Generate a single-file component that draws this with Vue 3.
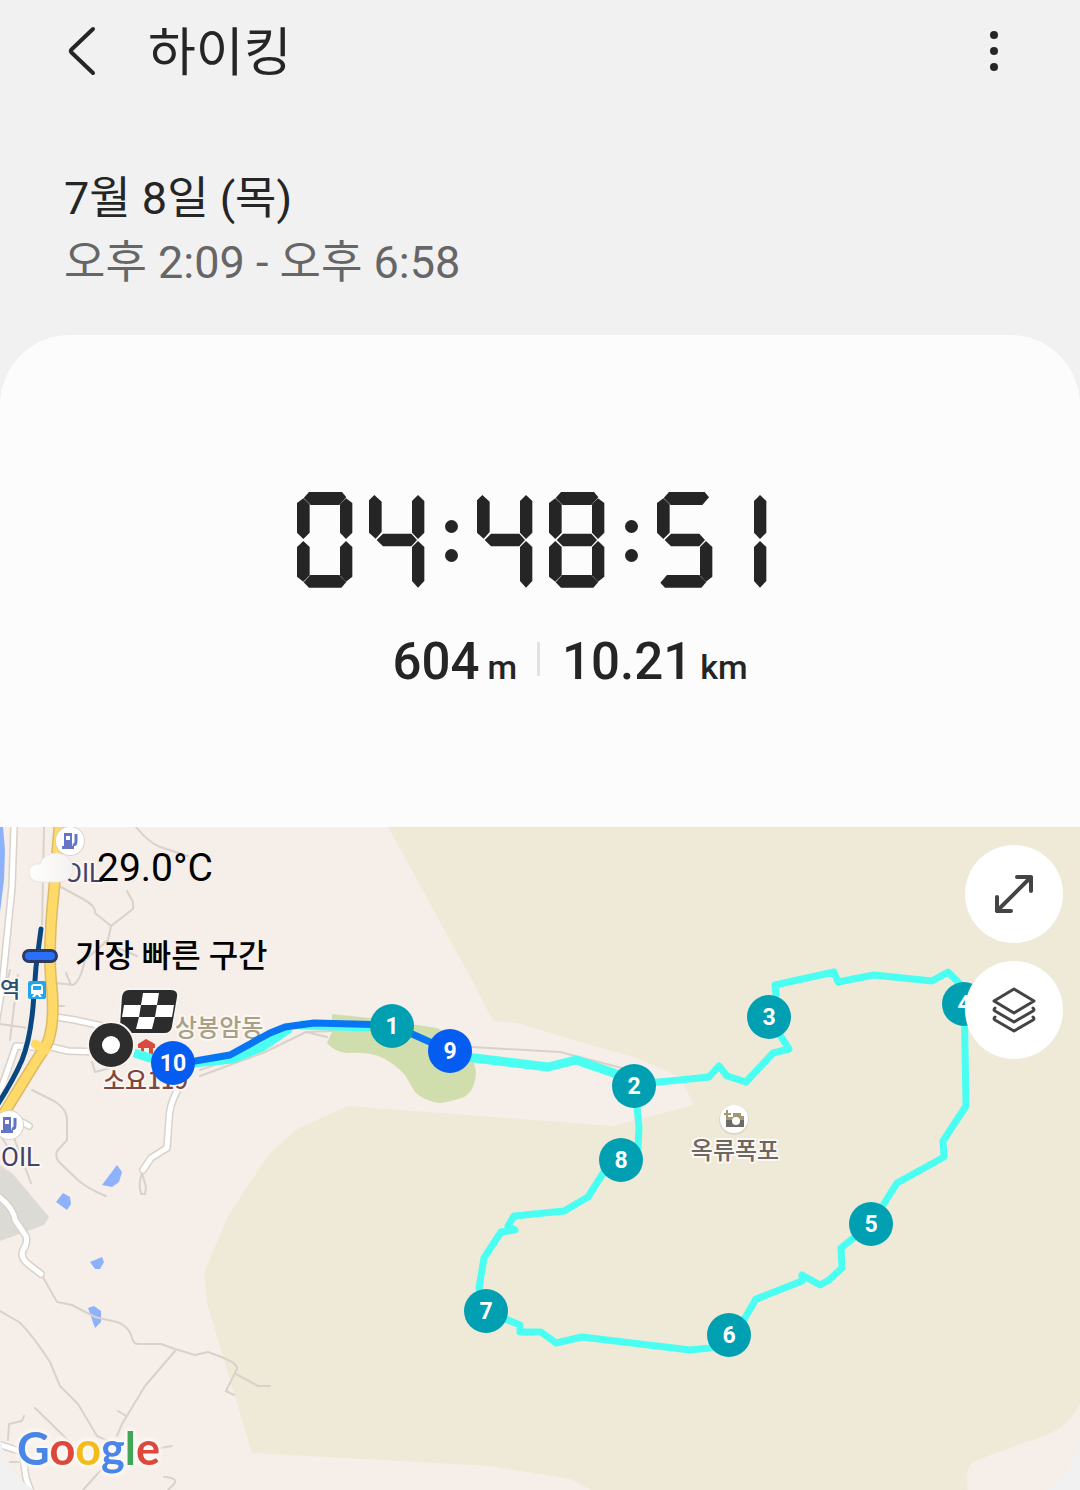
<script setup>
const time = '04:48:51'

// Segment outlines on a 168 x 288 digit cell
const shapes = {
  a: [[20, 18], [36, 0], [135, 0], [148, 16], [127, 39], [41, 39]],
  aOpen: [[20, 18], [36, 0], [143, 0], [156, 16], [136, 39], [41, 39]],
  b: [[147, 19], [166, 33], [166, 122], [147, 141], [129, 122], [129, 37]],
  bOpen: [[147, 9], [166, 27], [166, 122], [147, 141], [129, 122], [129, 27]],
  c: [[147, 147], [166, 165], [166, 254], [147, 269], [129, 250], [129, 165]],
  cOpen: [[147, 147], [166, 165], [166, 267], [147, 287], [129, 267], [129, 165]],
  d: [[20, 271], [40, 249], [127, 249], [148, 270], [133, 287], [36, 287]],
  dOpen: [[10, 272], [30, 249], [127, 249], [148, 270], [133, 287], [24, 287]],
  e: [[19, 147], [38, 165], [38, 250], [19, 269], [0, 254], [0, 165]],
  f: [[19, 19], [38, 37], [38, 122], [19, 141], [0, 122], [0, 33]],
  fOpen: [[16, 9], [38, 29], [38, 120], [20, 140], [0, 122], [0, 25]],
  g: [[23, 144], [42, 125], [127, 125], [144, 144], [127, 163], [42, 163]],
}
const digits = {
  0: ['a', 'b', 'c', 'd', 'e', 'f'],
  1: ['bOpen', 'cOpen'],
  4: ['fOpen', 'g', 'bOpen', 'cOpen'],
  5: ['aOpen', 'f', 'g', 'c', 'dOpen'],
  8: ['a', 'b', 'c', 'd', 'e', 'f', 'g'],
}
const clip = (name) =>
  `polygon(${shapes[name].map(([x, y]) => `${(x / 168) * 100}% ${(y / 288) * 100}%`).join(', ')})`

const markers = [
  { n: 1, x: 392, y: 1026 },
  { n: 9, x: 450, y: 1051, fast: true },
  { n: 2, x: 634, y: 1086 },
  { n: 8, x: 621, y: 1160 },
  { n: 3, x: 769, y: 1017 },
  { n: 4, x: 964, y: 1004 },
  { n: 5, x: 871, y: 1224 },
  { n: 6, x: 729, y: 1335 },
  { n: 7, x: 486, y: 1311 },
  { n: 10, x: 173, y: 1063, fast: true },
]
const fuelStops = [{ x: 70, y: 841 }, { x: 9, y: 1125 }]
</script>

<template>
  <main class="screen">
    <header class="bar">
      <button class="icon-btn back" aria-label="뒤로">
        <svg width="30" height="52" viewBox="0 0 30 52">
          <path d="M26 4 L4.500 24.500 Q3 26 4.500 27.500 L26 48" fill="none" stroke="#252525" stroke-width="4" stroke-linecap="round" />
        </svg>
      </button>
      <h1>하이킹</h1>
      <button class="icon-btn" aria-label="더보기">
        <svg width="12" height="44" viewBox="0 0 12 44" fill="#252525">
          <circle cx="6" cy="6" r="4" /><circle cx="6" cy="22" r="4" /><circle cx="6" cy="38" r="4" />
        </svg>
      </button>
    </header>

    <section class="when">
      <p class="date">7월 8일 (목)</p>
      <p class="hours">오후 2:09 - 오후 6:58</p>
    </section>

    <section class="card">
      <div class="clock" role="img" :aria-label="time">
        <template v-for="(ch, i) in time" :key="i">
          <span v-if="ch === ':'" class="colon"><i></i><i></i></span>
          <span v-else class="digit" :class="{ one: ch === '1' }">
            <i v-for="s in digits[ch]" :key="s" :style="{ clipPath: clip(s) }"></i>
          </span>
        </template>
      </div>
      <div class="stats">
        <p><b>604</b><span>m</span></p>
        <i class="rule"></i>
        <p><b>10.21</b><span>km</span></p>
      </div>
    </section>

    <section class="map">
      <svg class="canvas" viewBox="0 827 1080 673" preserveAspectRatio="xMidYMid slice">
        <rect y="827" width="1080" height="673" fill="#f6eee8" />
        <path fill="#efead7" d="M388 827 L472 980 L493 1021 L517 1023 L580 1042 L637 1058 L680 1077 L694 1105 L613 1126 L348 1106 L297 1129 L270 1153 L247 1187 L227 1218 L204 1273 L207 1303 L230 1380 L252 1453 L490 1466 L570 1479 L610 1500 H968 L967 1476 Q968 1464 974 1461 L1046 1435 Q1068 1427 1080 1404 V827Z" />
        <path fill="#d0dead" d="M332 1014 L370 1018 L437 1028 L470 1045 L476 1072 Q475 1091 464 1097 Q450 1102 440 1103 Q424 1101 415 1092 L405 1075 Q395 1064 383 1058 Q372 1052 347 1053 Q335 1052 327 1043 L332 1032Z" />
        <path fill="#dcdad5" d="M0 1165 L13 1174 L49 1217 L44 1225 L0 1241Z" />
        <g fill="#8db2fb">
          <path d="M0 827 H3 L5 850 L4 880 L0 912Z" />
          <path d="M117 1165 L122 1172 L119 1182 L112 1187 L102 1185Z" />
          <path d="M63 1193 L70 1197 L71 1204 L67 1210 L56 1202Z" />
          <path d="M90 1262 L102 1257 L104 1262 L100 1269 L95 1269Z" />
          <path d="M88 1308 L94 1306 L101 1311 L101 1322 L95 1328Z" />
        </g>

        <g fill="none" stroke="#d8d2cb" stroke-width="2" stroke-linejoin="round" stroke-linecap="round">
          <path d="M44 827 L42 930 M136 827 Q148 842 160 847 L188 856" />
          <path d="M61 887 L83 899 Q96 906 95 913 L111 926 L133 909 L133 902 L127 891 M111 926 L108 940 L85 960 Q80 982 73 985 L56 983 M66 973 L71 985 M118 948 L137 956" />
          <path d="M10 970 L0 1010 M18 975 L10 1040 M0 1024 L28 1028 M55 1006 H64" />
          <path d="M32 1090 L54 1101 Q66 1108 67 1118 V1140 L57 1151 Q55 1157 59 1162 L79 1181 Q90 1190 106 1196" />
          <path d="M14 1138 L31 1183 M0 1135 L10 1150" />
          <path d="M40 1272 L57 1302 L72 1305 L95 1317 L117 1322 Q128 1326 131 1335 Q133 1344 138 1344 H161 L175 1349 L195 1355 L208 1352 L224 1358 Q238 1364 237 1369 L226 1391 L234 1395 M236 1374 L258 1386 H270" />
          <path d="M0 1311 L19 1322 Q31 1333 50 1362 L60 1386 L78 1404 L97 1436 L106 1440 M175 1351 L145 1386 L122 1424 L117 1436 M118 1411 L126 1416 M35 1408 L72 1444 M8 1440 L9 1424 L22 1421 L24 1416 M83 1490 L101 1470 M160 1448 L172 1446 M164 1477 Q179 1478 174 1484 L168 1490 M10 1462 H22" />
          <path d="M92 1062 L95 1072 L125 1064 M200 1076 L265 1052 L306 1032 L327 1037 M306 1032 L332 1031 M472 1047 L560 1052 L622 1068 M200 1070 L264 1048" />
          <path d="M142 1173 Q138 1183 141 1194 L145 1194 L146 1187 L142 1173" />
        </g>
        <g fill="none" stroke-linejoin="round" stroke-linecap="round">
          <g stroke="#d8d2cb" stroke-width="8">
            <path d="M14 827 L12 887 L7 937 L2 987 L-5 1030" />
            <path d="M56 1017 L75 1020 L120 1030 M47 1046 L68 1051 L100 1052 M35 1047 L16 1046 L0 1092 M177 1091 Q169 1106 169 1120 L167 1148 L151 1158 L143 1170" />
            <path d="M-3 1195 Q14 1208 15 1220 L26 1236 Q28 1243 23 1250 Q20 1258 28 1264 L41 1274 M-2 1444 L22 1452 L26 1478 L32 1495 M22 1122 L29 1126" />
          </g>
          <g stroke="#fff" stroke-width="5">
            <path d="M14 827 L12 887 L7 937 L2 987 L-5 1030" />
            <path d="M56 1017 L75 1020 L120 1030 M47 1046 L68 1051 L100 1052 M35 1047 L16 1046 L0 1092 M177 1091 Q169 1106 169 1120 L167 1148 L151 1158 L143 1170" />
            <path d="M-3 1195 Q14 1208 15 1220 L26 1236 Q28 1243 23 1250 Q20 1258 28 1264 L41 1274 M-2 1444 L22 1452 L26 1478 L32 1495 M22 1122 L29 1126" />
          </g>
          <path d="M60 820 L54 890 Q48 945 51 980 Q55 1015 50 1035 Q48 1045 38 1058 L-4 1126" stroke="#dcbb66" stroke-width="12" />
          <path d="M60 820 L54 890 Q48 945 51 980 Q55 1015 50 1035 Q48 1045 38 1058 L-4 1126 M35 1044 L46 1050" stroke="#ffda69" stroke-width="9" />
          <path d="M41 929 L36 967 L33 1007 Q30 1040 22 1060 Q12 1083 -6 1110" stroke="#f4efe8" stroke-width="8" />
          <path d="M41 929 L36 967 L33 1007 Q30 1040 22 1060 Q12 1083 -6 1110" stroke="#0a4781" stroke-width="5" />
        </g>

        <g v-for="p in fuelStops" :key="p.y" :transform="`translate(${p.x} ${p.y})`">
          <circle r="15" fill="#d9d2cc" /><circle r="14" fill="#fff" />
          <path fill="#6474c6" fill-rule="evenodd" d="M-6 -8 H2 V5 H4 V8 H-8 V5 H-6Z M-4 -5 V-1 H0 V-5Z" />
          <path d="M3 3 Q6 5 6 0 V-7 M6 -4 V0" fill="none" stroke="#6474c6" stroke-width="3" />
        </g>
        <g class="label" font-size="26" fill="#454267">
          <text x="64" y="882">OIL</text><text x="1" y="1166">OIL</text>
        </g>
        <text class="label kr" x="0" y="997" font-size="22" fill="#25506f">역</text>
        <rect x="28" y="981" width="18" height="18" rx="2" fill="#23a4f1" />
        <path fill="#fff" fill-rule="evenodd" d="M33 984 H41 L43 986 V994 H40 L42 997 H39 L38 995 H36 L35 997 H32 L34 994 H31 V986Z M33 986 V990 H41 V986Z" />
        <text class="label kr" x="175" y="1036" font-size="24" fill="#a99f86">상봉암동</text>
        <text class="label kr" x="103" y="1089" font-size="24" fill="#80463f">소요119</text>
        <path fill="#da4a3c" d="M138 1044 L146 1039 L155 1044 V1048 H153 V1055 H149 V1048 H144 V1055 H141 V1048 H138Z" />

        <circle cx="734" cy="1120" r="15" fill="#ddd7c7" /><circle cx="734" cy="1119" r="14" fill="#fff" />
        <path fill="#a39873" d="M733 1113 H741 V1116 H744 V1121 H726 V1117 H733Z M726 1110 H728 V1113 H731 V1115 H728 V1118 H726 V1115 H724 V1113 H726Z" />
        <path fill="#706a64" d="M726 1120 H744 V1127 H726Z" /><circle cx="736" cy="1121" r="4" fill="#fff" />
        <text class="label kr" x="735" y="1159" text-anchor="middle" font-size="24" fill="#6c6762">옥류폭포</text>

        <g fill="none" stroke="#4afff2" stroke-width="7" stroke-linejoin="round">
          <path d="M634 1084 L670 1081 L709 1077 L719 1066 L727 1076 L746 1082 L773 1053 L789 1049 L780 1035 L769 1017 L776 995 L775 985 L834 972 L838 982 L874 975 L932 981 L948 972 L964 988 L966 1106 L943 1141 L944 1157 L897 1183 L871 1224 L841 1248 L842 1268 L829 1280 L820 1285 L802 1275 L802 1281 L756 1299 L735 1335 L710 1348 L690 1350 L582 1337 L556 1343 L541 1332 L520 1332 L520 1325 L486 1311 L479 1288 L484 1258 L501 1232 L515 1230 L508 1226 L514 1216 L564 1211 L588 1197 L621 1145 L638 1148 L639 1127 L635 1086" />
          <path d="M634 1080 L576 1060 L548 1067 L450 1055 M134 1053 L173 1065 L232 1059 L262 1047 L290 1028 M300 1025 L370 1027" stroke-width="9" />
        </g>
        <path d="M173 1064 L195 1061 L230 1055 L270 1033 L285 1027 L314 1023 L392 1025 L450 1051" fill="none" stroke="#0875f5" stroke-width="7" stroke-linejoin="round" />

        <path d="M129 989 H171 Q179 989 178 997 L173 1026 Q172 1034 164 1034 H126 Q118 1034 119 1026 L121 997 Q122 989 129 989Z" fill="#2c2c2c" stroke="#f6f4f1" stroke-width="2" />
        <path fill="#fff" d="M143 993 H159 L157 1005 H174 L172 1017 H155 L152 1029 H136 L139 1017 H122 L124 1005 H141Z" />
        <path fill="#2c2c2c" d="M141 1005 H157 L155 1017 H139Z" />
        <circle cx="111" cy="1045" r="23" fill="#2d2d2d" stroke="#f6f4f1" stroke-width="2" />
        <circle cx="111" cy="1045" r="9" fill="#fff" />

        <g v-for="m in markers" :key="m.n" class="marker" :class="{ fast: m.fast }">
          <circle :cx="m.x" :cy="m.y" r="22" />
          <text :x="m.x" :y="m.y + 8">{{ m.n }}</text>
        </g>

        <text class="logo" x="17" y="1465">
          <tspan fill="#4a86e8">G</tspan><tspan fill="#dc483c">o</tspan><tspan fill="#f2bc1b">o</tspan><tspan fill="#4a86e8">g</tspan><tspan fill="#3fa757">l</tspan><tspan fill="#dc483c">e</tspan>
        </text>
      </svg>

      <div class="legend">
        <p class="weather">
          <svg width="46" height="32" viewBox="0 0 46 32">
            <defs><linearGradient id="cloud" x1="0" x2="1"><stop offset="0" stop-color="#fff" /><stop offset="1" stop-color="#f4f2f0" /></linearGradient></defs>
            <path fill="url(#cloud)" stroke="#e9e6e2" d="M11 30 Q1 29 1 20 Q2 11 12 12 Q16 1 29 1 Q44 3 45 17 Q44 29 32 30Z" />
          </svg>
          <span>29.0°C</span>
        </p>
        <p class="fastest"><i></i><span>가장 빠른 구간</span></p>
      </div>

      <div class="tools">
        <button aria-label="지도 확대">
          <svg width="44" height="44" viewBox="0 0 44 44" fill="none" stroke="#444" stroke-width="4" stroke-linecap="round" stroke-linejoin="round">
            <path d="M5 39 L39 5 M25 5 H39 V19 M5 25 V39 H19" />
          </svg>
        </button>
        <button aria-label="지도 유형">
          <svg width="46" height="46" viewBox="0 0 46 46" fill="none" stroke="#444" stroke-width="3" stroke-linecap="round" stroke-linejoin="round">
            <path d="M23 2 L43 14 L23 26 L3 14Z M4 21 Q2 23 4 24 L23 35 L42 24 Q44 23 42 21 M4 30 Q2 32 4 33 L23 44 L42 33 Q44 32 42 30" />
          </svg>
        </button>
      </div>
    </section>
  </main>
</template>

<style>
body { margin: 0; background: #f1f1f1; }
</style>

<style scoped>
.screen {
  display: flex;
  flex-direction: column;
  min-height: 100vh;
  overflow: hidden;
  background: #f1f1f1;
  color: #252525;
  font-family: Roboto, "Noto Sans CJK KR", sans-serif;
}
h1, p { margin: 0; font-weight: 400; }
button { border: 0; padding: 0; cursor: pointer; }
.bar {
  display: flex;
  align-items: center;
  height: 102px;
  padding: 0 64px;
}
.icon-btn {
  display: flex;
  justify-content: center;
  width: 44px;
  background: none;
}
.back { justify-content: flex-start; margin-right: 40px; padding-left: 3px; }
h1 { flex: 1; padding-top: 6px; font-size: 52px; line-height: 72px; }
.when {
  padding: 65px 64px 40px;
  font-size: 45px;
  line-height: 64px;
}
.hours { color: #666; }
.card {
  display: flex;
  flex-direction: column;
  align-items: center;
  box-sizing: border-box;
  height: 492px;
  padding-top: 157px;
  border-radius: 70px 70px 0 0;
  background: #fcfcfc;
}
.clock { display: flex; gap: 16px; margin-right: 16px; }
.digit { position: relative; width: 56px; height: 96px; }
.digit i { position: absolute; inset: 0; background: #252525; }
.digit.one { margin-left: -18px; }
.colon {
  display: flex;
  flex-direction: column;
  align-items: center;
  gap: 16px;
  width: 20px;
  padding-top: 28px;
}
.colon i { width: 13px; height: 13px; border-radius: 50%; background: #252525; }
.stats {
  display: flex;
  align-items: flex-start;
  margin: 42px 0 0 60px;
  line-height: 64px;
}
.stats b { font-size: 51px; font-weight: 500; }
.stats span { margin-left: 8px; font-size: 34px; font-weight: 500; }
.rule { width: 3px; height: 34px; margin: 12px 22px 0 20px; background: #e2e2e2; }
.map {
  position: relative;
  flex: 1;
  min-height: 560px;
  margin-bottom: -10px;
  overflow: hidden;
  border-radius: 0 0 70px 70px;
}
.canvas { position: absolute; width: 100%; height: 100%; }
.label {
  font-family: Roboto, "Noto Sans CJK KR", sans-serif;
  stroke: #fbf7f3;
  stroke-width: 4px;
  stroke-linejoin: round;
  paint-order: stroke;
}
.kr { font-family: "Noto Sans CJK KR", sans-serif; font-weight: 500; }
.marker { fill: #00a0b2; }
.marker.fast { fill: #055cf0; }
.marker text { fill: #fff; font-size: 23px; font-weight: 700; text-anchor: middle; }
.logo {
  font-family: Lato, sans-serif;
  font-size: 45px;
  font-weight: 700;
  filter: drop-shadow(0 0 2px #fcf9f5) drop-shadow(0 0 2px #fcf9f5) drop-shadow(0 0 2px #fcf9f5);
}
.legend {
  position: absolute;
  top: 13px;
  left: 22px;
  color: #000;
}
.legend p { display: flex; align-items: center; }
.weather { font-size: 39px; line-height: 56px; }
.weather svg { margin: 0 23px 0 6px; }
.fastest { margin-top: 36px; font-size: 32px; font-weight: 500; line-height: 48px; }
.fastest i {
  box-sizing: border-box;
  width: 36px;
  height: 14px;
  margin-right: 17px;
  border: 3px solid #2b3c63;
  border-radius: 7px;
  background: #2b6ff6;
}
.tools {
  position: absolute;
  top: 18px;
  right: 17px;
  display: flex;
  flex-direction: column;
  gap: 18px;
}
.tools button {
  display: flex;
  align-items: center;
  justify-content: center;
  width: 98px;
  height: 98px;
  border-radius: 50%;
  background: #fff;
}
</style>
